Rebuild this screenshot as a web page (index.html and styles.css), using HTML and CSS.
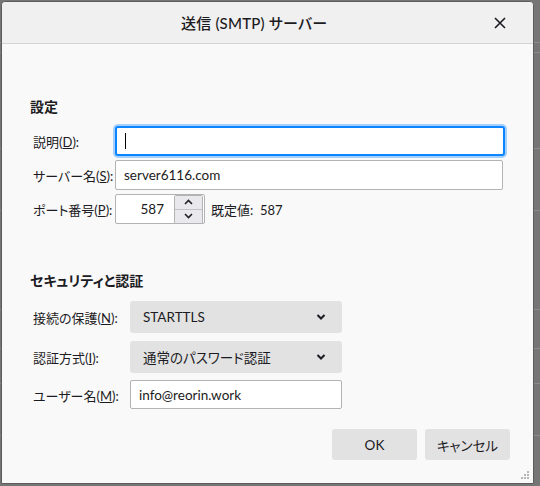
FILE: index.html
```html
<!DOCTYPE html>
<html lang="ja">
<head>
  <meta charset="UTF-8">
  <title>送信 (SMTP) サーバー</title>
  <link rel="stylesheet" href="styles.css">
</head>
<body>

  <div class="dialog">
    <!-- Title bar -->
    <div class="titlebar">
      <div class="title">送信 (SMTP) サーバー</div>
      <span class="close">
        <svg width="12" height="12" viewBox="0 0 12 12"><path d="M1 1 L11 11 M11 1 L1 11" stroke="#1c1b22" stroke-width="1.6" fill="none"/></svg>
      </span>
    </div>

    <div class="content">
      <!-- Settings -->
      <h2 class="section-title first">設定</h2>
      <div class="form-grid settings">
        <label>説明(<u>D</u>):</label>
        <div class="textbox focused"><span class="caret"></span></div>

        <label>サーバー名(<u>S</u>):</label>
        <div class="textbox">server6116.com</div>

        <label>ポート番号(<u>P</u>):</label>
        <div class="port-row">
          <div class="port-box">
            <span class="port-value">587</span>
            <div class="spinner">
              <span class="spin-btn">
                <svg width="9" height="6" viewBox="0 0 9 6"><path d="M1 5 L4.5 1.5 L8 5" stroke="#222" stroke-width="1.6" fill="none"/></svg>
              </span>
              <span class="spin-btn">
                <svg width="9" height="6" viewBox="0 0 9 6"><path d="M1 1 L4.5 4.5 L8 1" stroke="#222" stroke-width="1.6" fill="none"/></svg>
              </span>
            </div>
          </div>
          <span class="default-port">既定値:&nbsp; 587</span>
        </div>
      </div>

      <!-- Security -->
      <h2 class="section-title second">セキュリティと認証</h2>
      <div class="form-grid security">
        <label>接続の保護(<u>N</u>):</label>
        <div class="dropdown">
          <span>STARTTLS</span>
          <svg width="10" height="6" viewBox="0 0 10 6"><path d="M1.5 1 L5 4.5 L8.5 1" stroke="#1c1b22" stroke-width="2" fill="none"/></svg>
        </div>

        <label>認証方式(<u>I</u>):</label>
        <div class="dropdown">
          <span>通常のパスワード認証</span>
          <svg width="10" height="6" viewBox="0 0 10 6"><path d="M1.5 1 L5 4.5 L8.5 1" stroke="#1c1b22" stroke-width="2" fill="none"/></svg>
        </div>

        <label>ユーザー名(<u>M</u>):</label>
        <div class="textbox user">info@reorin.work</div>
      </div>

      <div class="buttons">
        <button>OK</button>
        <button>キャンセル</button>
      </div>
    </div>

    <!-- resize grip -->
    <svg class="grip" width="10" height="10" viewBox="0 0 10 10">
      <rect x="7" y="1" width="2" height="2" fill="#b5b5b5"/>
      <rect x="4" y="4" width="2" height="2" fill="#b5b5b5"/>
      <rect x="7" y="4" width="2" height="2" fill="#b5b5b5"/>
      <rect x="1" y="7" width="2" height="2" fill="#b5b5b5"/>
      <rect x="4" y="7" width="2" height="2" fill="#b5b5b5"/>
      <rect x="7" y="7" width="2" height="2" fill="#b5b5b5"/>
    </svg>
  </div>

</body>
</html>
```

FILE: styles.css
```css
/* Base */
body {
  margin: 0;
  height: 486px;
  overflow: hidden;
  background-color: #767676;
  /* faint rows of the window behind */
  background-image: linear-gradient(to bottom,
    transparent 42px, #8c8c8c 42px, #8c8c8c 43px, transparent 43px,
    transparent 52px, #8c8c8c 52px, #8c8c8c 53px, transparent 53px,
    transparent 148px, #8c8c8c 148px, #8c8c8c 149px, transparent 149px,
    transparent 210px, #8c8c8c 210px, #8c8c8c 211px, transparent 211px,
    transparent 309px, #8c8c8c 309px, #8c8c8c 310px, transparent 310px,
    transparent 348px, #8c8c8c 348px, #8c8c8c 349px, transparent 349px,
    transparent 383px, #8c8c8c 383px, #8c8c8c 384px, transparent 384px,
    transparent 435px, #8c8c8c 435px, #8c8c8c 436px, transparent 436px);
  font-family: Lato, "Noto Sans CJK JP", sans-serif;
  font-feature-settings: "palt";
  font-size: 13px;
  color: #1c1b22;
}
.dialog {
  position: relative;
  margin: 1px 0 0 1px;
  width: 531px;
  height: 481px;
  border: 1px solid #5c5c5c;
  border-radius: 4px 4px 0 0;
  background-color: #f9f9fa;
  display: flex;
  flex-direction: column;
}
/* Title bar */
.titlebar {
  height: 41px;
  flex: none;
  background-color: #f0f0f0;
  border-bottom: 1px solid #d4d4d4;
  border-radius: 4px 4px 0 0;
  display: flex;
  align-items: center;
  padding-left: 179px;
}
.title {
  flex: 1;
  font-size: 15px;
  font-weight: 500;
  letter-spacing: 0.2px;
}
.close {
  margin-right: 27px;
  display: flex;
}
/* Content */
.content {
  padding: 0 23px 0 28px;
  display: flex;
  flex-direction: column;
}
.section-title {
  margin: 0;
  font-size: 14px;
  font-weight: bold;
  line-height: 20px;
}
.section-title.first {
  margin-top: 53px;
}
.section-title.second {
  margin-top: 47px;
}
.form-grid {
  display: grid;
  align-items: center;
  padding-left: 3px;
}
.form-grid label {
  white-space: nowrap;
}
.settings {
  grid-template-columns: 82px 388px;
  row-gap: 4px;
  margin-top: 9px;
}
.security {
  grid-template-columns: 97px 212px;
  margin-top: 10px;
  row-gap: 8px;
}
.textbox {
  height: 28px;
  box-sizing: content-box;
  border: 1px solid #b3b3b3;
  border-radius: 2px;
  background-color: #fff;
  padding: 0 8px;
  display: flex;
  align-items: center;
  font-size: 13.5px;
}
.textbox.focused {
  height: 26px;
  width: 370px;
  border: 2px solid #0a84ff;
  border-radius: 3px;
  box-shadow: 0 0 0 2px rgba(10, 132, 255, 0.35);
}
.caret {
  width: 1px;
  height: 16px;
  background-color: #000;
}
.textbox.user {
  height: 27px;
  margin-top: -1px;
}
/* Port */
.port-row {
  display: flex;
  align-items: center;
  gap: 6px;
}
.port-box {
  width: 88px;
  height: 28px;
  border: 1px solid #b3b3b3;
  border-radius: 2px;
  background-color: #fff;
  display: flex;
  align-items: center;
}
.port-value {
  flex: 1;
  text-align: right;
  padding-right: 10px;
  font-size: 13.5px;
}
.spinner {
  width: 27px;
  height: 27px;
  display: flex;
  flex-direction: column;
  border: 1px solid #b3b3b3;
  border-radius: 2px;
  margin-right: 1px;
}
.spin-btn {
  flex: 1;
  background-color: #e9e9ed;
  display: flex;
  align-items: center;
  justify-content: center;
}
.spin-btn + .spin-btn {
  border-top: 1px solid #c4c4c4;
}
/* Dropdowns */
.dropdown {
  height: 32px;
  background-color: #e2e2e3;
  border-radius: 3px;
  padding: 0 16px 0 13px;
  display: flex;
  align-items: center;
  justify-content: space-between;
  font-size: 13.5px;
}
/* Buttons */
.buttons {
  display: flex;
  justify-content: flex-end;
  gap: 8px;
  margin-top: 20px;
}
.buttons button {
  width: 85px;
  height: 31px;
  border: none;
  border-radius: 3px;
  background-color: #e2e2e3;
  font-family: inherit;
  font-feature-settings: "palt";
  font-size: 13.5px;
  color: #1c1b22;
}
.grip {
  position: absolute;
  right: 3px;
  bottom: 3px;
}
```
